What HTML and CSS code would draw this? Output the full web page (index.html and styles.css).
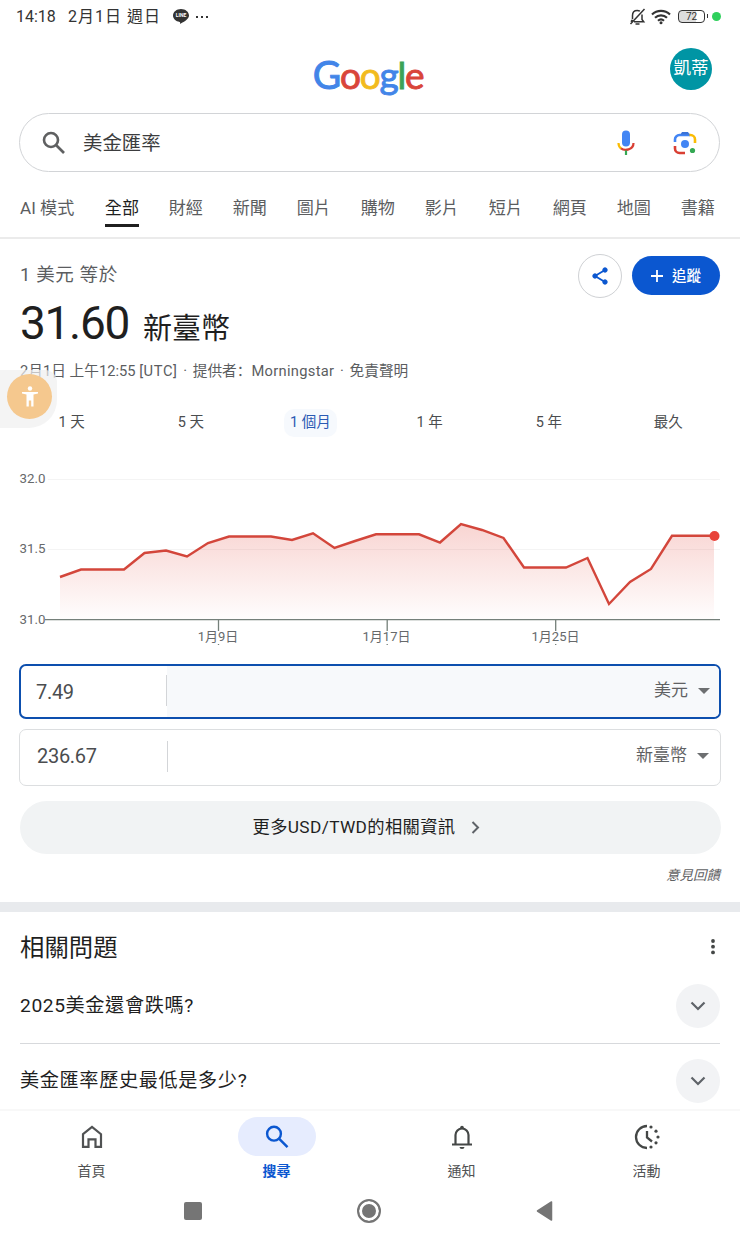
FILE: index.html
```html
<!DOCTYPE html>
<html lang="zh-Hant">
<head>
    <meta charset="UTF-8">
    <meta name="viewport" content="width=device-width, initial-scale=1.0">
    <title>美金匯率</title>
    <link rel="stylesheet" href="styles.css">
</head>
<body>
    <div class="status-bar">
        <span class="time">14:18</span>
        <span class="date">2月1日 週日</span>
        <svg class="line-icon" width="16" height="15" viewBox="0 0 16 15">
            <path d="M8 0C3.600 0 0 2.900 0 6.500c0 3.200 2.800 5.900 6.700 6.400.5.100.5.500.4 2 2.500-1.300 8.900-4.600 8.900-8.400C16 2.900 12.400 0 8 0z" fill="#333"/>
            <text x="8" y="8.300" text-anchor="middle">LINE</text>
        </svg>
        <span class="dots"><i></i><i></i><i></i></span>
        <div class="status-icons">
            <svg width="17" height="18" viewBox="0 0 17 18" fill="none" stroke="#333" stroke-width="1.500">
                <path d="M3.500 11V7.500C3.500 4 5.500 2.500 8.200 2.500c1 0 1.900.2 2.700.7M13 6.500v5l1.700 2.200H5M2 13.800l1.500-2M6.500 16h4M15.500 1L1.500 16"/>
            </svg>
            <svg width="20" height="16" viewBox="0 0 20 16" fill="none" stroke="#333" stroke-width="2.200">
                <path d="M1 5.500a13 13 0 0 1 18 0M4 8.700a8.700 8.700 0 0 1 12 0M7 11.700a4.500 4.500 0 0 1 6 0"/>
                <circle cx="10" cy="13.700" r="1.500" fill="#333" stroke="none"/>
            </svg>
            <div class="battery">72</div>
            <span class="green-dot"></span>
        </div>
    </div>

    <header class="header">
        <div class="logo"><span class="b cap">G</span><span class="r">o</span><span class="y">o</span><span class="b">g</span><span class="g">l</span><span class="r">e</span></div>
        <div class="avatar">凱蒂</div>
    </header>

    <div class="search-box">
        <svg width="24" height="24" viewBox="0 0 24 24" fill="none" stroke="#5f6061" stroke-width="2.600">
            <circle cx="9" cy="9" r="7"/><path d="M14 14l8 8"/>
        </svg>
        <span class="query">美金匯率</span>
        <svg class="mic" width="18" height="26" viewBox="0 0 18 26" fill="none" stroke-width="2.200">
            <rect x="5" y="0.500" width="8" height="16" rx="4" fill="#4285f4"/>
            <path d="M1.500 13c0 2.500 1 4.300 2.700 5.500" stroke="#fbbc04"/>
            <path d="M4 18.300c3.500 2.800 12.500 1.800 12.500-5.300" stroke="#d93f33"/>
            <path d="M9 20.500v4.500" stroke="#34a853"/>
        </svg>
        <svg class="lens" width="24" height="24" viewBox="0 0 24 24" fill="none" stroke-width="2.600">
            <path d="M2 11V8.500a4.500 4.500 0 0 1 4.500-4.500H17" stroke="#4285f4"/>
            <path d="M7.500 3.500L9 1h6l1.500 2.500z" fill="#3973d8"/>
            <path d="M16.500 4h1a4.500 4.500 0 0 1 4.500 4.500V12" stroke="#fbbc04"/>
            <path d="M2 15v2.500A4.500 4.500 0 0 0 6.500 22H12" stroke="#d93f33"/>
            <circle cx="12" cy="13" r="4" fill="#4285f4"/>
            <circle cx="19.500" cy="19.500" r="2.600" fill="#34a853"/>
        </svg>
    </div>

    <nav class="tabs">
        <span>AI 模式</span>
        <span class="active">全部</span>
        <span>財經</span>
        <span>新聞</span>
        <span>圖片</span>
        <span>購物</span>
        <span>影片</span>
        <span>短片</span>
        <span>網頁</span>
        <span>地圖</span>
        <span>書籍</span>
    </nav>

    <section class="currency">
        <div class="currency-top">
            <div class="rate">
                <div class="from">1 美元 等於</div>
                <div class="to"><span class="amount">31.60</span><span class="unit">新臺幣</span></div>
            </div>
            <div class="share">
                <svg width="16" height="18" viewBox="0 0 16 18" fill="#0b57d0" stroke="#0b57d0">
                    <path d="M13 3L3 9l10 6" fill="none" stroke-width="1.800"/>
                    <circle cx="13" cy="3" r="2.200"/><circle cx="3" cy="9" r="2.200"/><circle cx="13" cy="15" r="2.200"/>
                </svg>
            </div>
            <div class="follow">
                <svg width="12" height="12" viewBox="0 0 12 12" stroke="#fff" stroke-width="1.800"><path d="M6 0v12M0 6h12"/></svg>
                <span>追蹤</span>
            </div>
        </div>
        <div class="source">2月1日 上午12:55 <span class="utc">[UTC]</span> <i>·</i> 提供者<span class="colon" lang="zh-Hans">：</span><span class="provider">Morningstar</span> <i>·</i> 免責聲明</div>

        <div class="periods">
            <span>1 天</span>
            <span>5 天</span>
            <span class="selected"><b>1 個月</b></span>
            <span>1 年</span>
            <span>5 年</span>
            <span>最久</span>
        </div>

        <svg class="chart" width="740" height="190" viewBox="0 460 740 190">
            <defs>
                <linearGradient id="fade" x1="0" y1="524" x2="0" y2="619" gradientUnits="userSpaceOnUse">
                    <stop offset="0" stop-color="#e2463b" stop-opacity="0.230"/>
                    <stop offset="1" stop-color="#e2463b" stop-opacity="0.010"/>
                </linearGradient>
            </defs>
            <path class="grid" d="M48 479.500H720M48 549.500H720"/>
            <path fill="url(#fade)" d="M60 577L81 569.500H124L144.500 553L166 550.500L187 556.500L208 543L229 536.500H271L292 540L313 533.300L334.500 548L355 541L376 534.300H419L440 542.500L461 524L482 530L503.500 538L524 567.500H566L587.500 558L609 604L630 582L651 569L672 535.800H714V619H60z"/>
            <path class="line" d="M60 577L81 569.500H124L144.500 553L166 550.500L187 556.500L208 543L229 536.500H271L292 540L313 533.300L334.500 548L355 541L376 534.300H419L440 542.500L461 524L482 530L503.500 538L524 567.500H566L587.500 558L609 604L630 582L651 569L672 535.800H714"/>
            <circle cx="714.500" cy="536" r="5" fill="#e8433a"/>
            <path class="axis" d="M45 619.700H720M218.500 620v11M387.200 620v11M555.700 620v11M218.500 644v1M387.200 644v1M555.700 644v1"/>
            <text x="19.500" y="483">32.0</text>
            <text x="19.500" y="553">31.5</text>
            <text x="19.500" y="623.500">31.0</text>
            <text x="218" y="640.500" class="mid">1月9日</text>
            <text x="386.500" y="640.500" class="mid">1月17日</text>
            <text x="555.500" y="640.500" class="mid">1月25日</text>
        </svg>

        <div class="field focused">
            <div class="value">7.49</div>
            <div class="select">美元<i class="caret"></i></div>
        </div>
        <div class="field">
            <div class="value">236.67</div>
            <div class="select">新臺幣<i class="caret"></i></div>
        </div>

        <div class="more">
            <span>更多USD/TWD的相關資訊</span>
            <svg width="9" height="13" viewBox="0 0 9 13" fill="none" stroke="#5f6368" stroke-width="2"><path d="M1.500 1l5.500 5.500L1.500 12"/></svg>
        </div>
        <div class="feedback">意見回饋</div>
    </section>

    <section class="questions">
        <div class="questions-head">
            <h2>相關問題</h2>
            <svg width="4" height="16" viewBox="0 0 4 16" fill="#444746"><circle cx="2" cy="2" r="1.900"/><circle cx="2" cy="7.700" r="1.900"/><circle cx="2" cy="13.400" r="1.900"/></svg>
        </div>
        <div class="question">
            <span>2025美金還會跌嗎?</span>
            <div class="expand"><svg width="16" height="10" viewBox="0 0 16 10" fill="none" stroke="#5f6368" stroke-width="2.200"><path d="M1.500 1.500L8 8l6.500-6.500"/></svg></div>
        </div>
        <div class="question">
            <span>美金匯率歷史最低是多少?</span>
            <div class="expand"><svg width="16" height="10" viewBox="0 0 16 10" fill="none" stroke="#5f6368" stroke-width="2.200"><path d="M1.500 1.500L8 8l6.500-6.500"/></svg></div>
        </div>
    </section>

    <nav class="bottom-nav">
        <div class="item">
            <div class="icon"><svg width="22" height="24" viewBox="0 0 22 24" fill="none" stroke="#505253" stroke-width="2.200"><path d="M2 9.200L11 2l9 7.200V21.800h-5.500v-7.500h-7v7.500H2z"/></svg></div>
            首頁
        </div>
        <div class="item current">
            <div class="icon"><svg width="24" height="24" viewBox="0 0 24 24" fill="none" stroke="#0b57d0" stroke-width="2.400"><circle cx="9" cy="8.700" r="6.900"/><path d="M14 13.700l8.500 8.500"/></svg></div>
            搜尋
        </div>
        <div class="item">
            <div class="icon"><svg width="20" height="24" viewBox="0 0 20 24" fill="none" stroke="#444746" stroke-width="2.200"><path d="M0 19.500h20M3.500 19V10a6.500 6.500 0 0 1 13 0v9"/><circle cx="10" cy="2.500" r="1.800" fill="#444746" stroke="none"/><path d="M7.500 22h5a2.500 2 0 0 1-5 0z" fill="#444746" stroke="none"/></svg></div>
            通知
        </div>
        <div class="item">
            <div class="icon"><svg width="26" height="26" viewBox="0 0 26 26" fill="none" stroke="#444746" stroke-width="2.300"><path d="M13 2a11 11 0 0 0 0 22M13 7v6.500l5 4"/><g fill="#444746" stroke="none"><circle cx="17" cy="3" r="1.600"/><circle cx="22" cy="7.200" r="1.600"/><circle cx="24" cy="13" r="1.600"/><circle cx="22" cy="18.800" r="1.600"/><circle cx="17" cy="23" r="1.600"/></g></svg></div>
            活動
        </div>
    </nav>
    <div class="system-nav">
        <i class="square"></i>
        <i class="home"></i>
        <svg width="17" height="20" viewBox="0 0 17 20"><path d="M15.500 1v18L1.500 10z" fill="#757575" stroke="#757575" stroke-width="1.500" stroke-linejoin="round"/></svg>
    </div>

    <!-- floating accessibility shortcut -->
    <div class="a11y">
        <div class="a11y-btn">
            <svg width="18" height="21" viewBox="0 0 18 21" fill="#fff"><circle cx="9" cy="2.500" r="2.200"/><path d="M1 6h16v1.600l-4.500.8V20.500h-2.300V14.500H7.800v6H5.500V8.400L1 7.600z"/></svg>
        </div>
    </div>
</body>
</html>
```
FILE: styles.css
```css
* {
    box-sizing: border-box;
}
body {
    font-family: Roboto, 'Noto Sans CJK TC', sans-serif;
    background-color: #fff;
    color: #1f1f1f;
    margin: 0;
    width: 740px;
    height: 1240px;
    overflow: hidden;
    position: relative;
}
svg {
    display: block;
    flex: none;
}
.status-bar {
    display: flex;
    align-items: center;
    height: 33px;
    padding: 0 19px 0 16px;
    font-size: 16px;
    color: #333;
}
.time {
    width: 52px;
}
.date {
    width: 105px;
    margin-top: -3px;
    letter-spacing: 1px;
    white-space: nowrap;
}
.line-icon text {
    font-size: 5px;
    font-weight: bold;
    fill: #fff;
}
.dots {
    display: flex;
    gap: 3px;
    margin-left: 7px;
}
.dots i {
    width: 2px;
    height: 2px;
    background: #333;
}
.status-icons {
    display: flex;
    align-items: center;
    gap: 6px;
    margin-left: auto;
}
.status-icons svg + svg {
    margin: 0 1px 0 -1px;
}
.battery {
    position: relative;
    width: 27px;
    height: 13px;
    margin-right: 1px;
    border: 1.5px solid #333;
    border-radius: 4px;
    font-size: 10px;
    line-height: 11px;
    text-align: center;
    background: linear-gradient(90deg, #ddd 70%, #fff 70%);
}
.battery::after {
    content: '';
    position: absolute;
    right: -4px;
    top: 3px;
    width: 1.5px;
    height: 4px;
    background: #333;
}
.green-dot {
    width: 9px;
    height: 9px;
    border-radius: 50%;
    background: #2fd05c;
}
.header {
    display: grid;
    grid-template-columns: 1fr auto 1fr;
    align-items: center;
    height: 80px;
    padding: 0 28px 9px;
}
.logo {
    grid-column: 2;
    margin: 12px 0 0 -4px;
    font-family: Lato, sans-serif;
    font-size: 37px;
    line-height: 48px;
    letter-spacing: -1.2px;
    -webkit-text-stroke: 0.9px currentColor;
}
.cap {
    font-size: 39px;
}
.b { color: #4285e8; }
.r { color: #d9453a; }
.y { color: #f2bb1d; }
.g { color: #3ba358; }
.avatar {
    justify-self: end;
    width: 42px;
    height: 42px;
    border-radius: 50%;
    background: #0095a4;
    color: #fff;
    font-size: 17.5px;
    line-height: 41px;
    text-align: center;
}
.search-box {
    display: flex;
    align-items: center;
    height: 59px;
    margin: 0 20px 0 19px;
    padding: 0 22px;
    border: 1px solid #d2d4d7;
    border-radius: 30px;
}
.query {
    margin: -2px 0 0 17px;
    font-size: 19.4px;
    color: #3c3d3e;
}
.mic {
    margin-left: auto;
}
.lens {
    margin-left: 38px;
}
.tabs {
    display: flex;
    gap: 29.8px;
    height: 67px;
    padding: 19px 0 0 20px;
    border-bottom: 2px solid #ebebeb;
    font-size: 17.1px;
    line-height: 34px;
    color: #5b5d5f;
    white-space: nowrap;
}
.tabs span:first-child {
    width: 55px;
}
.tabs .active {
    height: 36px;
    border-bottom: 3px solid #1f1f1f;
    color: #1f1f1f;
}
.currency {
    height: 663px;
    padding-top: 15px;
}
.currency-top {
    display: flex;
    align-items: flex-start;
    height: 103px;
    padding: 0 20px;
}
.rate {
    flex: 1;
}
.from {
    font-size: 18.5px;
    line-height: 43px;
    color: #5b5d5f;
    letter-spacing: 0.6px;
}
.to {
    display: flex;
    align-items: baseline;
    line-height: 53px;
}
.amount {
    width: 123px;
    font-size: 46px;
    letter-spacing: -1.3px;
}
.unit {
    font-size: 29px;
}
.share {
    display: flex;
    align-items: center;
    justify-content: center;
    width: 44px;
    height: 44px;
    margin-right: 10px;
    border: 1px solid #cfd1d4;
    border-radius: 50%;
}
.follow {
    display: flex;
    align-items: center;
    justify-content: center;
    gap: 9px;
    width: 88px;
    height: 39px;
    margin-top: 2px;
    border-radius: 20px;
    background: #0b57d0;
    color: #fff;
    font-size: 14.5px;
    font-weight: 500;
}
.follow span {
    margin-top: -3px;
}
.source {
    height: 33px;
    padding-left: 20px;
    font-size: 14.7px;
    line-height: 26px;
    color: #5b5d5f;
    white-space: nowrap;
}
.source i {
    margin: 0 2px;
    font-style: normal;
}
.utc {
    letter-spacing: 0.6px;
}
.colon {
    font-family: 'Noto Sans CJK SC', sans-serif;
}
.provider {
    letter-spacing: 0.3px;
}
.periods {
    display: grid;
    grid-template-columns: repeat(6, 1fr);
    height: 70px;
    padding: 19px 12px 0;
    font-size: 14.5px;
    line-height: 28px;
    text-align: center;
    color: #4b4d4f;
}
.periods b {
    display: inline-block;
    padding: 0 6px;
    border-radius: 10px;
    background: #f6f9fd;
    font-weight: normal;
    color: #2a5ab4;
}
.chart {
    margin-bottom: 14px;
}
.chart text {
    font-size: 13.3px;
    fill: #66696b;
}
.chart .mid {
    font-size: 13px;
    text-anchor: middle;
}
.grid {
    stroke: #f4f4f4;
}
.line {
    fill: none;
    stroke: #d3463b;
    stroke-width: 2.4;
}
.axis {
    stroke: #75807a;
    stroke-width: 1.3;
}
.field {
    display: flex;
    height: 57px;
    margin: 0 19px 15px;
    border: 1px solid #dcdee0;
    border-radius: 7px;
    overflow: hidden;
}
.value {
    position: relative;
    width: 148px;
    padding-left: 17px;
    font-size: 20px;
    line-height: 53px;
    letter-spacing: -0.3px;
    color: #4b4d4f;
}
.value::after {
    content: '';
    position: absolute;
    right: 0;
    top: 11px;
    width: 1px;
    height: 31px;
    background: #d3d5d8;
}
.select {
    display: flex;
    flex: 1;
    align-items: center;
    justify-content: flex-end;
    padding: 0 11px 8px 0;
    font-size: 17px;
    color: #5f6163;
}
.caret {
    margin: 5px 0 0 10px;
    border: 6px solid transparent;
    border-top-color: #6d6f71;
    border-bottom: 0;
}
.focused {
    height: 55px;
    margin-bottom: 10px;
    border: 2px solid #0d4fae;
}
.focused .value {
    width: 146px;
    padding-left: 15px;
    line-height: 52px;
}
.focused .value::after {
    top: 9px;
}
.focused .select {
    background: #f7f9fb;
    padding-right: 9px;
    padding-bottom: 6px;
}
.more {
    display: flex;
    align-items: center;
    justify-content: center;
    gap: 16px;
    height: 53px;
    margin: 0 19.5px;
    border-radius: 27px;
    background: #f1f3f4;
    font-size: 17.3px;
    letter-spacing: 0.35px;
    padding-right: 7px;
}
.more span {
    margin-top: -5px;
}
.feedback {
    padding-right: 20px;
    font-size: 13.5px;
    line-height: 42px;
    font-style: italic;
    text-align: right;
    color: #5f6163;
}
.questions {
    height: 207px;
    border-top: 10px solid #e8eaed;
    overflow: hidden;
    padding: 0 20px;
}
.questions-head {
    display: flex;
    align-items: center;
    justify-content: space-between;
    height: 56px;
    padding: 14px 5px 0 0;
}
h2 {
    margin: -4px 0 0;
    font-size: 24.4px;
    font-weight: normal;
}
.question {
    display: flex;
    align-items: center;
    justify-content: space-between;
    height: 76px;
    border-bottom: 1px solid #d7d9dc;
    font-size: 19.2px;
    white-space: nowrap;
    letter-spacing: 0.6px;
}
.question + .question {
    height: 73px;
    border: 0;
}
.question span {
    margin-top: -4px;
}
.expand {
    display: flex;
    align-items: center;
    justify-content: center;
    width: 44px;
    height: 44px;
    border-radius: 50%;
    background: #f2f3f5;
}
.bottom-nav {
    display: grid;
    grid-template-columns: repeat(4, 1fr);
    height: 77px;
    padding-top: 6px;
    border-top: 2px solid #f8f8f8;
    font-size: 14px;
    line-height: 30px;
    text-align: center;
    color: #505253;
}
.item {
    padding-right: 2px;
}
.icon {
    display: flex;
    align-items: center;
    justify-content: center;
    width: 78px;
    height: 39px;
    margin: 0 auto;
    border-radius: 20px;
}
.current {
    color: #0b57d0;
    font-weight: bold;
}
.current .icon {
    background: #e6ecfe;
}
.system-nav {
    display: flex;
    align-items: center;
    justify-content: space-between;
    height: 50px;
    padding: 0 187px 0 184px;
}
.square {
    width: 18px;
    height: 18px;
    border-radius: 2px;
    background: #757575;
}
.home {
    width: 24px;
    height: 24px;
    border: 2px solid #757575;
    border-radius: 50%;
    background: #757575;
    box-shadow: inset 0 0 0 3px #fff;
}
.a11y {
    position: absolute;
    left: 0;
    top: 370px;
    width: 57px;
    height: 58px;
    border-radius: 0 12px 28px 0;
    background: rgba(240, 240, 240, 0.7);
}
.a11y-btn {
    display: flex;
    align-items: center;
    justify-content: center;
    width: 45px;
    height: 45px;
    margin: 4px 0 0 7px;
    border-radius: 50%;
    background: #f5c88e;
}
```
